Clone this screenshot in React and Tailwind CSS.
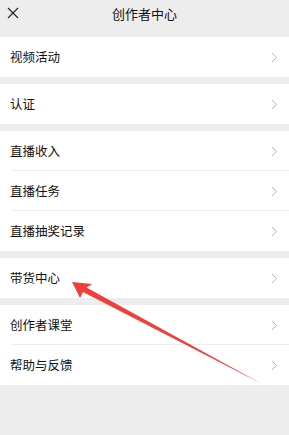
import React from "react";

const sections = [
  ["视频活动"],
  ["认证"],
  ["直播收入", "直播任务", "直播抽奖记录"],
  ["带货中心"],
  ["创作者课堂", "帮助与反馈"],
];

const Chevron = () => (
  <svg width="7" height="11" viewBox="0 0 7 11" className="shrink-0">
    <polyline points="1,1 5.5,5.5 1,10" fill="none" stroke="#b5b5b5" strokeWidth="1" />
  </svg>
);

const Row = ({ label, last }) => (
  <div className="relative flex h-10 items-center justify-between pl-[10px] pr-[11px]">
    <span className="text-[12.5px] text-[#111]">{label}</span>
    <Chevron />
    {!last && <div className="absolute bottom-0 left-[11px] right-0 h-px bg-[#ededed]" />}
  </div>
);

export default function App() {
  return (
    <div
      className="relative h-[435px] w-[289px] overflow-hidden bg-[#ededed]"
      style={{ fontFamily: '"Noto Sans CJK SC", "Noto Sans", sans-serif' }}
    >
      <div className="relative flex h-[31px] items-start justify-center pt-[4px]">
        <svg width="12" height="12" viewBox="0 0 12 12" className="absolute left-[7px] top-[7px]">
          <path d="M1 1 L11 11 M11 1 L1 11" stroke="#222" strokeWidth="1.1" />
        </svg>
        <span className="text-[13px] text-[#111]">创作者中心</span>
      </div>
      <div className="flex flex-col gap-[7px] pt-[6px]">
        {sections.map((items, i) => (
          <div key={i} className="bg-white">
            {items.map((label, j) => (
              <Row key={label} label={label} last={j === items.length - 1} />
            ))}
          </div>
        ))}
      </div>
      <svg className="pointer-events-none absolute left-0 top-0" width="289" height="435">
        <polygon
          points="72,282 92,284 86.5,287.5 262,384 83,292 80,298"
          fill="#f0403c"
        />
      </svg>
    </div>
  );
}
